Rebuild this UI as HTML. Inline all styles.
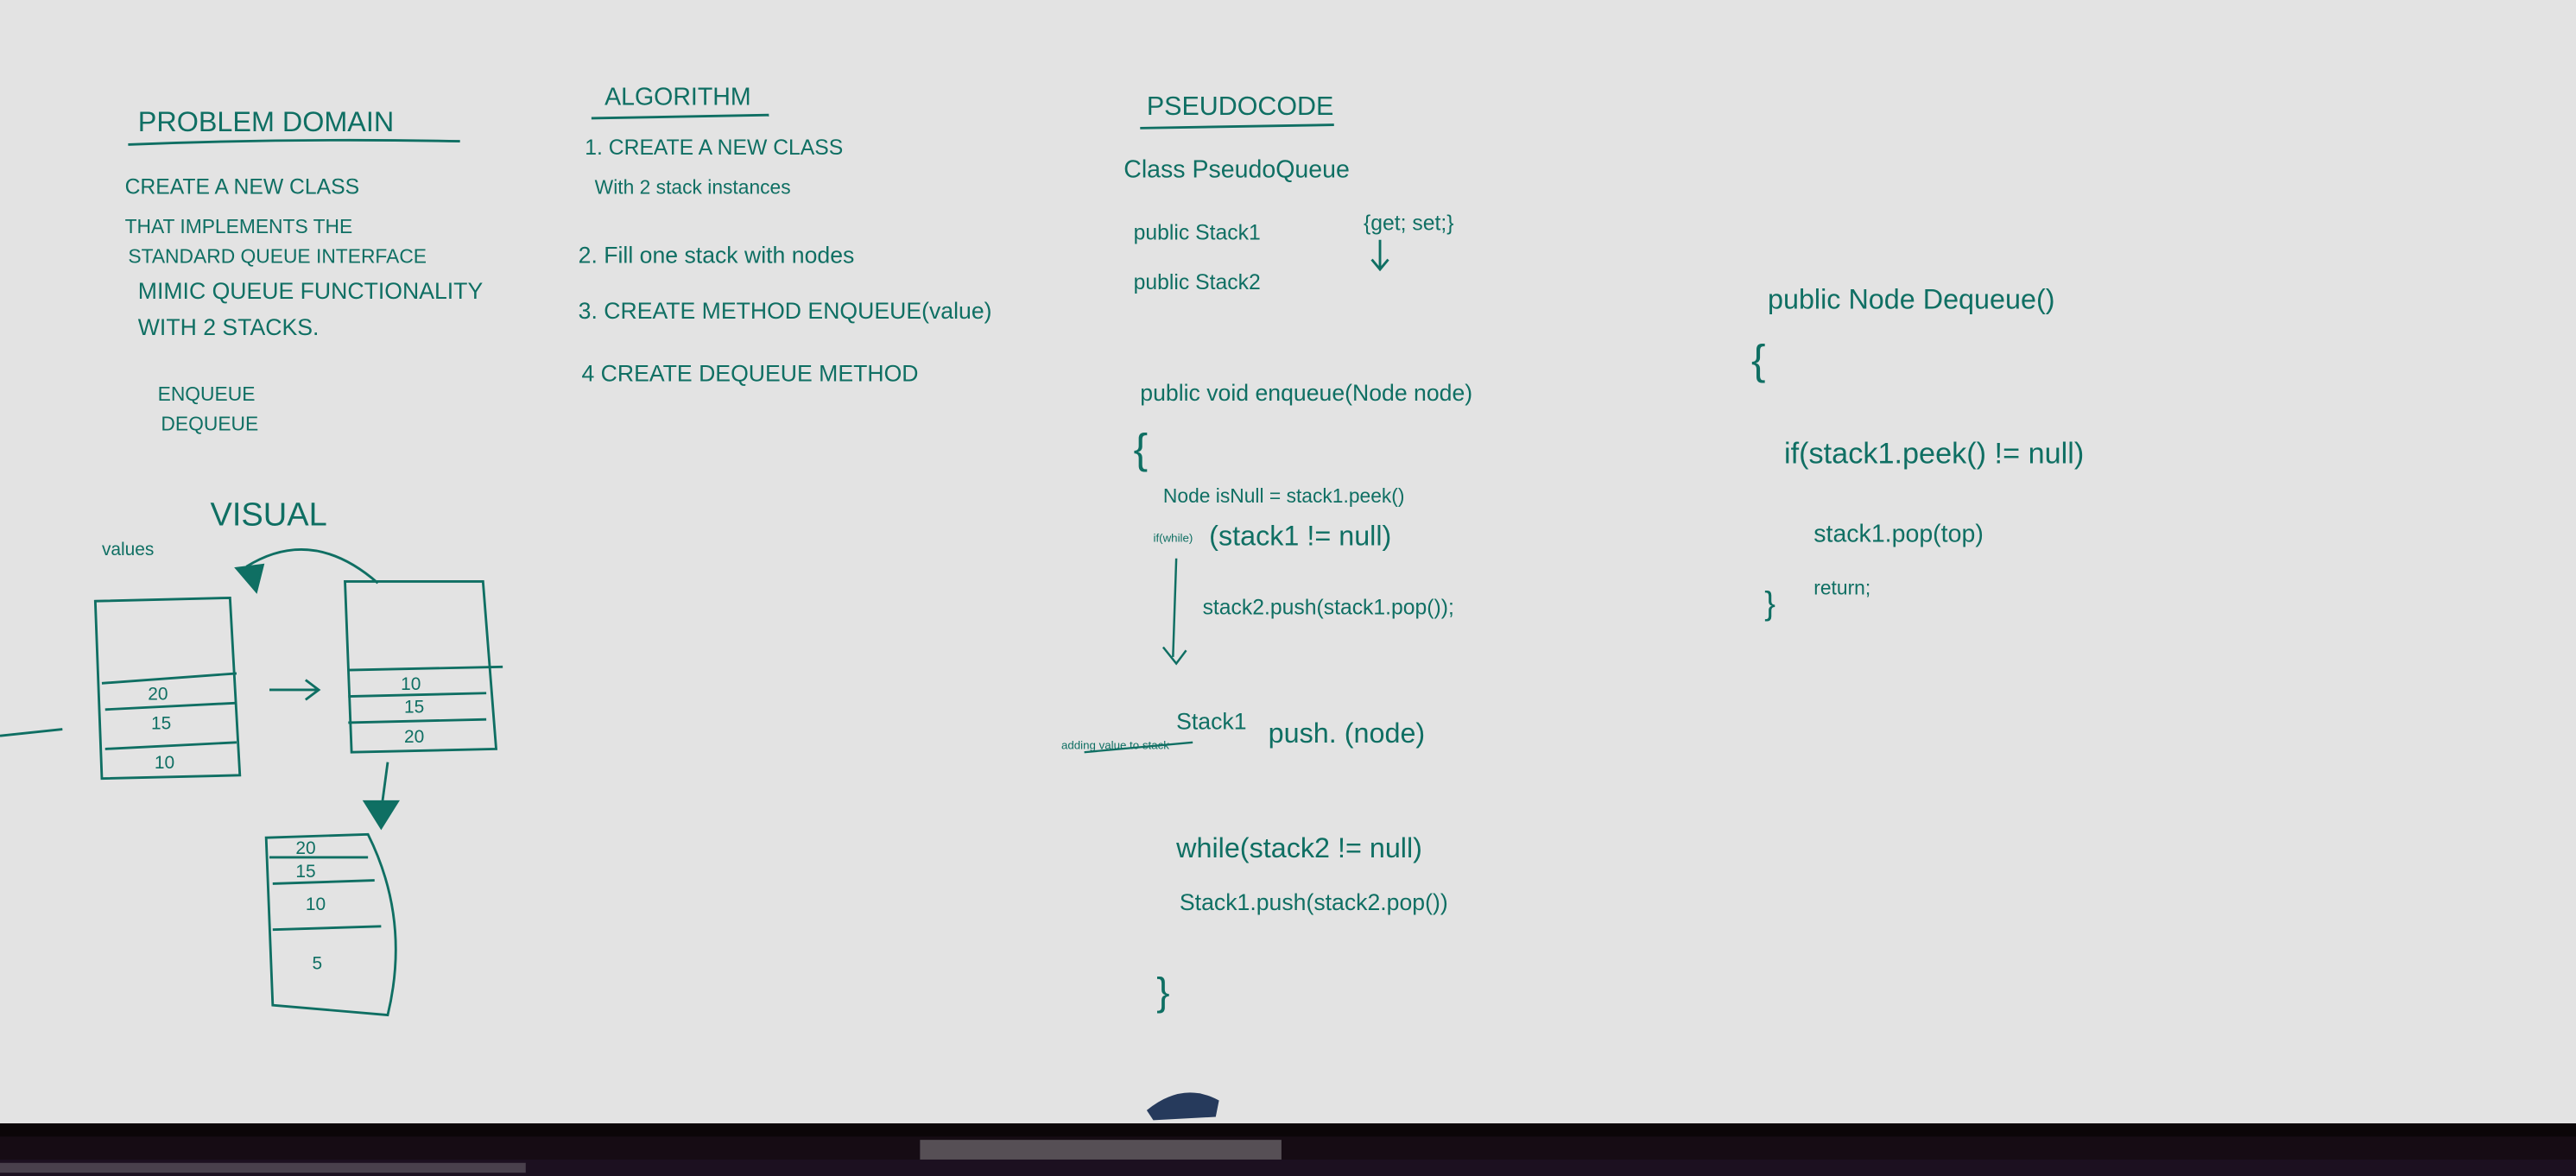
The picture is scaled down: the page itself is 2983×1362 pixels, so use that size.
<!DOCTYPE html>
<html><head><meta charset="utf-8"><style>
html,body{margin:0;padding:0;background:#e3e3e3;}
svg{display:block}
text{font-family:"Liberation Sans",sans-serif;fill:#0f6f63;}
</style></head><body>
<svg width="2983" height="1362" viewBox="0 0 1568 716" preserveAspectRatio="none" xmlns="http://www.w3.org/2000/svg">
<rect width="1568" height="716" fill="#e3e3e3"/>
<g font-size="15">
<text x="84" y="80" font-size="17">PROBLEM DOMAIN</text>
<path d="M78 88 Q180 84 280 86" stroke="#0f6f63" stroke-width="1.5" fill="none"/>
<text x="76" y="118" font-size="13">CREATE A NEW CLASS</text>
<text x="76" y="142" font-size="12">THAT IMPLEMENTS THE</text>
<text x="78" y="160" font-size="12">STANDARD QUEUE INTERFACE</text>
<text x="84" y="182" font-size="14">MIMIC QUEUE FUNCTIONALITY</text>
<text x="84" y="204" font-size="14">WITH 2 STACKS.</text>
<text x="96" y="244" font-size="12">ENQUEUE</text>
<text x="98" y="262" font-size="12">DEQUEUE</text>

<text x="368" y="64" font-size="15">ALGORITHM</text>
<path d="M360 72 L468 70" stroke="#0f6f63" stroke-width="1.5"/>
<text x="356" y="94" font-size="13">1. CREATE A NEW CLASS</text>
<text x="362" y="118" font-size="12">With 2 stack instances</text>
<text x="352" y="160" font-size="14">2. Fill one stack with nodes</text>
<text x="352" y="194" font-size="14">3. CREATE METHOD ENQUEUE(value)</text>
<text x="354" y="232" font-size="14">4 CREATE DEQUEUE METHOD</text>

<text x="698" y="70" font-size="16">PSEUDOCODE</text>
<path d="M694 78 L812 76" stroke="#0f6f63" stroke-width="1.5"/>
<text x="684" y="108" font-size="15">Class PseudoQueue</text>
<text x="690" y="146" font-size="13">public Stack1</text>
<text x="690" y="176" font-size="13">public Stack2</text>
<text x="830" y="140" font-size="13">{get; set;}</text>
<path d="M840 146 L840 164 M835 158 L840 164 L845 158" stroke="#0f6f63" stroke-width="1.5" fill="none"/>
<text x="694" y="244" font-size="14">public void enqueue(Node node)</text>
<text x="690" y="282" font-size="26">{</text>
<text x="708" y="306" font-size="12">Node isNull = stack1.peek()</text>
<text x="736" y="332" font-size="17">(stack1 != null)</text>
<text x="702" y="330" font-size="7">if(while)</text>
<path d="M716 340 L714 400 M708 394 L716 404 L722 396" stroke="#0f6f63" stroke-width="1.3" fill="none"/>
<text x="732" y="374" font-size="13">stack2.push(stack1.pop());</text>
<text x="646" y="456" font-size="7">adding value to stack</text>
<path d="M660 458 L726 452" stroke="#0f6f63" stroke-width="1.2"/>
<text x="716" y="444" font-size="14">Stack1</text>
<text x="772" y="452" font-size="17">push. (node)</text>
<text x="716" y="522" font-size="17">while(stack2 != null)</text>
<text x="718" y="554" font-size="14">Stack1.push(stack2.pop())</text>
<text x="704" y="612" font-size="24">}</text>

<text x="1076" y="188" font-size="17">public Node Dequeue()</text>
<text x="1066" y="228" font-size="26">{</text>
<text x="1086" y="282" font-size="18">if(stack1.peek() != null)</text>
<text x="1104" y="330" font-size="15">stack1.pop(top)</text>
<text x="1074" y="374" font-size="20">}</text>
<text x="1104" y="362" font-size="12">return;</text>

<text x="62" y="338" font-size="11">values</text>
<text x="128" y="320" font-size="20">VISUAL</text>
</g>
<g stroke="#0f6f63" stroke-width="1.5" fill="none">
<path d="M150 345 Q190 320 230 355"/>
<path d="M144 346 L156 360 L160 344 Z" fill="#0f6f63"/>
<path d="M58 366 L140 364 L146 472 L62 474 Z"/>
<path d="M62 416 L144 410 M64 432 L144 428 M64 456 L144 452"/>
<path d="M210 354 L294 354 L302 456 L214 458 Z"/>
<path d="M212 408 L306 406 M212 424 L296 422 M212 440 L296 438"/>
<path d="M164 420 L194 420 M186 414 L194 420 L186 426" />
<path d="M0 448 L38 444"/>
<path d="M236 464 L232 494"/>
<path d="M222 488 L232 504 L242 488 Z" fill="#0f6f63"/>
<path d="M162 510 L224 508 Q250 560 236 618 L166 612 Z"/>
<path d="M164 522 L224 522 M166 538 L228 536 M166 566 L232 564"/>
</g>
<g font-size="11">
<text x="90" y="426">20</text><text x="92" y="444">15</text><text x="94" y="468">10</text>
<text x="244" y="420">10</text><text x="246" y="434">15</text><text x="246" y="452">20</text>
<text x="180" y="520">20</text><text x="180" y="534">15</text><text x="186" y="554">10</text><text x="190" y="590">5</text>
</g>
<path d="M698 676 Q720 658 742 670 L740 680 L702 682 Z" fill="#263a5c"/>
<rect x="0" y="684" width="1568" height="32" fill="#160c14"/>
<rect x="0" y="684" width="1568" height="8" fill="#0b0608"/>
<rect x="560" y="694" width="220" height="12" fill="#cfcfcf" opacity="0.35"/>
<rect x="0" y="706" width="1568" height="10" fill="#1c1020"/>
<rect x="0" y="708" width="320" height="6" fill="#cfcfcf" opacity="0.25"/>
</svg>
</body></html>
